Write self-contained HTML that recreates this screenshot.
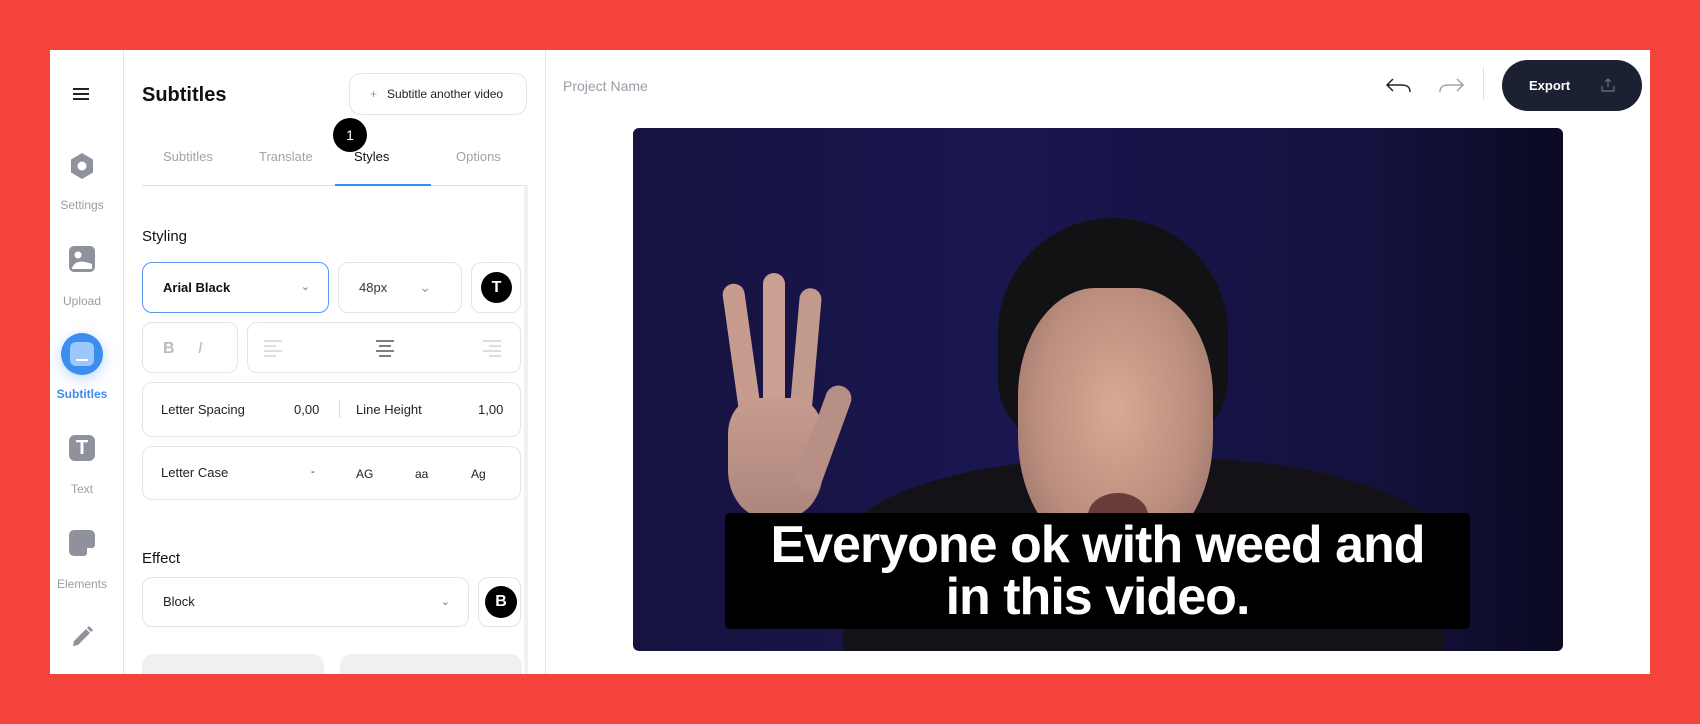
<!DOCTYPE html>
<html><head><meta charset="utf-8"><style>
*{box-sizing:border-box;margin:0;padding:0}
body{width:1700px;height:724px;background:#f4433a;font-family:"Liberation Sans",sans-serif;position:relative;overflow:hidden}
.card{position:absolute;left:50px;top:50px;width:1600px;height:624px;background:#fff;overflow:hidden}
.a{position:absolute}
.side{left:0;top:0;width:74px;height:624px;border-right:1px solid #e6e7ea}
.lbl{width:64px;text-align:center;font-size:12px;color:#9a9ca6}
.ic{left:25px;width:24px;height:24px;border-radius:6px;background:#8f919c}
.box{border:1.5px solid #e3e4e8;border-radius:10px;background:#fff}
.tab{font-size:13px;color:#a1a3ab;top:99px}
.dark{background:#000;border-radius:50%;color:#fff;font-weight:bold;text-align:center}
</style></head><body>
<div class="card">
 <div class="a side"></div>
 <div class="a" style="left:23px;top:38px;width:16px;height:2px;background:#222;box-shadow:0 5px 0 #222,0 10px 0 #222"></div>
 <svg class="a" style="left:19px;top:102px" width="26" height="28" viewBox="0 0 26 28"><path d="M13 1 L24 7.5 V20.5 L13 27 L2 20.5 V7.5Z" fill="#8f919c"/><circle cx="13" cy="14" r="4.5" fill="#fff"/></svg>
 <div class="a lbl" style="left:0px;top:148px">Settings</div>
 <svg class="a" style="left:19px;top:196px" width="26" height="26" viewBox="0 0 26 26"><rect width="26" height="26" rx="5" fill="#8f919c"/><circle cx="9" cy="9" r="3.5" fill="#fff"/><path d="M3 22 C6 15 12 14 23 18 V23 H3Z" fill="#fff"/></svg>
 <div class="a lbl" style="left:0px;top:244px">Upload</div>
 <div class="a" style="left:11px;top:283px;width:42px;height:42px;border-radius:50%;background:#3b8df0;box-shadow:0 4px 14px rgba(59,141,240,.35)"></div>
 <div class="a" style="left:20px;top:292px;width:24px;height:24px;border-radius:6px;background:#9cc7fa"></div>
 <div class="a" style="left:26px;top:309px;width:12px;height:2px;background:#fff"></div>
 <div class="a lbl" style="left:0px;top:337px;color:#3b8df0;font-weight:bold">Subtitles</div>
 <div class="a ic" style="top:385px;left:19px;width:26px;height:26px;color:#fff;font-weight:bold;font-size:20px;text-align:center;line-height:26px">T</div>
 <div class="a lbl" style="left:0px;top:432px">Text</div>
 <svg class="a" style="left:19px;top:480px" width="26" height="26" viewBox="0 0 26 26"><path d="M5 0H21A5 5 0 0 1 26 5V16L16 26H5A5 5 0 0 1 0 21V5A5 5 0 0 1 5 0Z" fill="#8f919c"/><path d="M18 24 L24 18 H18Z" fill="#fff"/></svg>
 <div class="a lbl" style="left:0px;top:527px">Elements</div>
 <svg class="a" style="left:21px;top:576px" width="22" height="22" viewBox="0 0 22 22"><path d="M2 20 L3 15 L15 3 L19 7 L7 19Z" fill="#8f919c"/><path d="M16 2 L18 0 L22 4 L20 6Z" fill="#8f919c"/></svg>

 <div class="a" style="left:495px;top:0;width:1px;height:624px;background:#e6e7ea"></div>
 <div class="a" style="left:92px;top:34px;font-size:20px;font-weight:bold;color:#111">Subtitles</div>
 <div class="a box" style="left:299px;top:23px;width:178px;height:42px;border-radius:12px;font-size:12px;color:#222;line-height:40px;padding-left:20px"><span style="color:#999;margin-right:10px">+</span>Subtitle another video</div>
 <div class="a tab" style="left:113px">Subtitles</div>
 <div class="a tab" style="left:209px">Translate</div>
 <div class="a tab" style="left:304px;color:#111">Styles</div>
 <div class="a tab" style="left:406px">Options</div>
 <div class="a dark" style="left:283px;top:68px;width:34px;height:34px;line-height:34px;font-size:14px;font-weight:normal">1</div>
 <div class="a" style="left:92px;top:135px;width:385px;height:1px;background:#dfe1e5"></div>
 <div class="a" style="left:285px;top:134px;width:96px;height:2px;background:#3b8df0"></div>
 <div class="a" style="left:474px;top:136px;width:4px;height:488px;background:#f0f1f3"></div>
 <div class="a" style="left:92px;top:178px;font-size:15px;color:#111">Styling</div>
 <div class="a box" style="left:92px;top:212px;width:187px;height:51px;border-color:#5d95ec;font-size:13px;font-weight:bold;color:#111;line-height:49px;padding-left:20px">Arial Black<span style="position:absolute;right:18px;color:#777;font-weight:normal;font-size:11px">&#8964;</span></div>
 <div class="a box" style="left:288px;top:212px;width:124px;height:51px;font-size:13px;color:#333;line-height:49px;padding-left:20px">48px<span style="position:absolute;right:30px;color:#999;font-size:14px">&#8964;</span></div>
 <div class="a box" style="left:421px;top:212px;width:50px;height:51px"></div>
 <div class="a dark" style="left:431px;top:222px;width:31px;height:31px;line-height:31px;font-size:16px">T</div>
 <div class="a box" style="left:92px;top:272px;width:96px;height:51px"></div>
 <div class="a" style="left:113px;top:290px;font-size:16px;font-weight:bold;color:#b9bbc2">B</div>
 <div class="a" style="left:148px;top:290px;font-size:16px;font-style:italic;color:#b9bbc2">I</div>
 <div class="a box" style="left:197px;top:272px;width:274px;height:51px"></div>
 <svg class="a" style="left:214px;top:289px" width="20" height="18"><g stroke="#c9cbd1" stroke-width="1.3"><path d="M0 2H18M0 7H12M0 12H18M0 17H12"/></g></svg>
 <svg class="a" style="left:325px;top:289px" width="20" height="18"><g stroke="#333" stroke-width="1.3"><path d="M1 2H19M4 7H16M1 12H19M4 17H16"/></g></svg>
 <svg class="a" style="left:431px;top:289px" width="20" height="18"><g stroke="#c9cbd1" stroke-width="1.3"><path d="M2 2H20M8 7H20M2 12H20M8 17H20"/></g></svg>
 <div class="a box" style="left:92px;top:332px;width:379px;height:55px;font-size:13px;color:#222">
  <span class="a" style="left:18px;top:19px">Letter Spacing</span><span class="a" style="left:151px;top:19px">0,00</span>
  <span class="a" style="left:196px;top:17px;width:1px;height:18px;background:#ddd"></span>
  <span class="a" style="left:213px;top:19px">Line Height</span><span class="a" style="left:335px;top:19px">1,00</span></div>
 <div class="a box" style="left:92px;top:396px;width:379px;height:54px;font-size:13px;color:#222">
  <span class="a" style="left:18px;top:18px">Letter Case</span><span class="a" style="left:168px;top:19px;font-size:11px">-</span>
  <span class="a" style="left:213px;top:20px;font-size:12px">AG</span><span class="a" style="left:272px;top:20px;font-size:12px">aa</span><span class="a" style="left:328px;top:20px;font-size:12px">Ag</span></div>
 <div class="a" style="left:92px;top:500px;font-size:15px;color:#111">Effect</div>
 <div class="a box" style="left:92px;top:527px;width:327px;height:50px;font-size:13px;color:#222;line-height:48px;padding-left:20px">Block<span style="position:absolute;right:18px;color:#777;font-size:11px">&#8964;</span></div>
 <div class="a box" style="left:428px;top:527px;width:43px;height:50px"></div>
 <div class="a dark" style="left:435px;top:536px;width:32px;height:32px;line-height:32px;font-size:16px">B</div>
 <div class="a" style="left:92px;top:604px;width:182px;height:30px;border-radius:12px;background:#f0f0f2"></div>
 <div class="a" style="left:290px;top:604px;width:182px;height:30px;border-radius:12px;background:#f0f0f2"></div>

 <div class="a" style="left:513px;top:28px;font-size:14px;color:#9a9ca6">Project Name</div>
 <svg class="a" style="left:1334px;top:25px" width="28" height="20" viewBox="0 0 28 20"><path d="M26 17 C26 11 22 10 17 10 H3 M9 4 L3 10 L9 16" fill="none" stroke="#222" stroke-width="1.5"/></svg>
 <svg class="a" style="left:1388px;top:25px" width="28" height="20" viewBox="0 0 28 20"><path d="M2 17 C2 11 6 10 11 10 H25 M19 4 L25 10 L19 16" fill="none" stroke="#9ea3b0" stroke-width="1.5"/></svg>
 <div class="a" style="left:1433px;top:17px;width:1px;height:33px;background:#dedfe3"></div>
 <div class="a" style="left:1452px;top:10px;width:140px;height:51px;border-radius:26px;background:#1b2033;color:#fff;font-size:13px;font-weight:bold;line-height:51px;padding-left:27px">Export
  <svg style="position:absolute;left:99px;top:18px" width="14" height="14" viewBox="0 0 14 14"><path d="M7 1V9M4 4L7 1L10 4M1 8V13H13V8" fill="none" stroke="#6a7080" stroke-width="1.2"/></svg></div>

 <div class="a" style="left:583px;top:78px;width:930px;height:523px;border-radius:6px;overflow:hidden;background:linear-gradient(90deg,#161340 0%,#1a1650 40%,#14113d 80%,#0b0a22 100%)">
  <div class="a" style="left:210px;top:330px;width:600px;height:200px;border-radius:45% 45% 0 0;background:#141216"></div>
  <div class="a" style="left:365px;top:90px;width:230px;height:230px;border-radius:50% 50% 30% 30%;background:#121114"></div>
  <div class="a" style="left:385px;top:160px;width:195px;height:270px;border-radius:40% 40% 45% 45%;background:radial-gradient(ellipse at 50% 45%,#d8aa96 0%,#b98c7c 60%,#8c6a64 100%)"></div>
  <div class="a" style="left:455px;top:365px;width:60px;height:45px;border-radius:50%;background:#6a3b3b"></div>
  <div class="a" style="left:100px;top:155px;width:22px;height:170px;border-radius:11px;background:#c79c8f;transform:rotate(-8deg)"></div>
  <div class="a" style="left:130px;top:145px;width:22px;height:180px;border-radius:11px;background:#c9a092"></div>
  <div class="a" style="left:160px;top:160px;width:22px;height:170px;border-radius:11px;background:#c29a8d;transform:rotate(5deg)"></div>
  <div class="a" style="left:95px;top:270px;width:95px;height:120px;border-radius:30% 30% 40% 40%;background:linear-gradient(#c79c8f,#ad857c)"></div>
  <div class="a" style="left:178px;top:255px;width:26px;height:110px;border-radius:13px;background:#b88f85;transform:rotate(20deg)"></div>
  <div class="a" style="left:92px;top:385px;width:745px;height:116px;background:#000;border-radius:5px;color:#fff;font-weight:bold;font-size:52px;line-height:52px;text-align:center;padding-top:6px;letter-spacing:-1px;white-space:nowrap">Everyone ok with weed and<br>in this video.</div>
 </div>
</div>
</body></html>
